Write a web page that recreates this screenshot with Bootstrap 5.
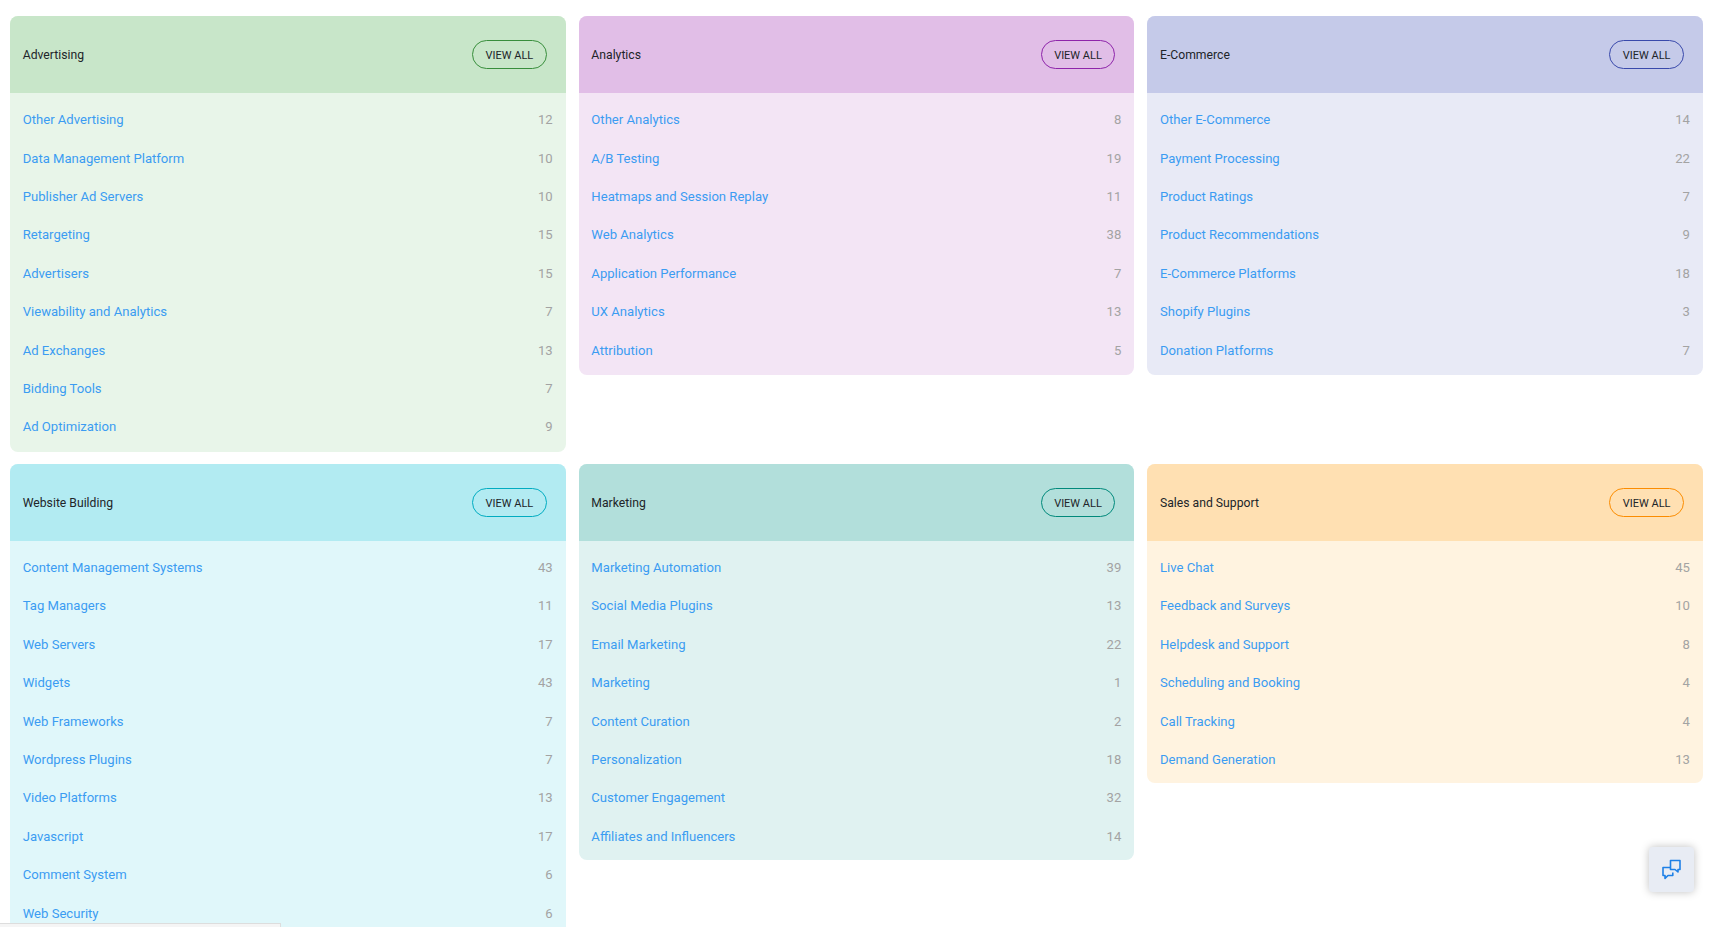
<!DOCTYPE html>
<html lang="en">
<head>
  <meta charset="UTF-8">
  <meta name="viewport" content="width=device-width, initial-scale=1.0">
  <title>Categories</title>
  <link href="https://cdn.jsdelivr.net/npm/bootstrap@5.3.0/dist/css/bootstrap.min.css" rel="stylesheet">
  <style>
    html, body { overflow: hidden; height: 927px; }
    body { font-family: Roboto, "Noto Sans", sans-serif; font-size: 13.100px; color: #212529; background: #fff; }
    .page-wrap { padding: 16px 13px 0 10px; }
    .cat-row { --bs-gutter-x: 13px; --bs-gutter-y: 0; margin-bottom: 12px; }
    .cat-card { border: 0; border-radius: 8px; overflow: hidden; background: var(--soft); }
    .cat-head { height: 77px; padding: 0 19px 0 12.700px; background: var(--strong); border: 0; border-radius: 0 !important; }
    .cat-title { padding-top: 1px; font-size: 12.200px; color: #212529; }
    .view-btn { width: 74.600px; height: 29px; padding: 1px 0 0; font-size: 11px; line-height: 27px; border: 1px solid var(--line); border-radius: 15px; color: #212529; background: transparent; text-transform: uppercase; }
    .cat-list { padding: 7.800px 0 4.500px; background: transparent; border-radius: 0; }
    #row-top .cat-list { padding: 7.800px 0 5.500px; }
    .cat-item { height: 38.400px; padding: 0 13px 0 12.700px; background: transparent; border: 0; }
    .cat-item a { color: #3b9cf2; text-decoration: none; }
    .cat-count { color: #a3a3a3; }
    .green { --strong: #c8e6c9; --soft: #e8f5e9; --line: #388e3c; }
    .purple { --strong: #e1bee7; --soft: #f3e5f5; --line: #8e24aa; }
    .indigo { --strong: #c5cae9; --soft: #e8eaf6; --line: #3949ab; }
    .cyan { --strong: #b2ebf2; --soft: #e0f7fa; --line: #00acc1; }
    .teal { --strong: #b2dfdb; --soft: #e0f2f1; --line: #00897b; }
    .orange { --strong: #ffe0b2; --soft: #fff3e0; --line: #fb8c00; }
    .chat-fab { position: fixed; left: 1649px; top: 847px; width: 45px; height: 45px; padding: 0; border: 0; border-radius: 4px; background: #e8ecf4; box-shadow: 0 0 8px rgba(0, 0, 0, .25); }
    .status-strip { position: fixed; left: 0; bottom: 0; width: 281px; height: 4px; background: #f5f5f5; border-top: 1px solid #ddd; border-right: 1px solid #ddd; }
  </style>
</head>
<body>
  <div class="page-wrap">
    <div class="row cat-row align-items-start" id="row-top"></div>
    <div class="row cat-row align-items-start" id="row-bottom"></div>
  </div>

  <button class="chat-fab d-flex align-items-center justify-content-center" type="button" aria-label="Chat">
    <svg width="22" height="22" viewBox="0 0 22 22" fill="none" stroke="#1e80e6" stroke-width="1.6" stroke-linejoin="round">
      <path d="M9 8.500H2v8h2v3l3-3h4.800v-3"/>
      <path d="M9.500 1.500h9.500v9h-2v2.500l-3-2.500h-4.500z"/>
    </svg>
  </button>
  <div class="status-strip"></div>

  <script>
    const rows = {
      'row-top': [
        ['green', 'Advertising', [['Other Advertising', 12], ['Data Management Platform', 10], ['Publisher Ad Servers', 10], ['Retargeting', 15], ['Advertisers', 15], ['Viewability and Analytics', 7], ['Ad Exchanges', 13], ['Bidding Tools', 7], ['Ad Optimization', 9]]],
        ['purple', 'Analytics', [['Other Analytics', 8], ['A/B Testing', 19], ['Heatmaps and Session Replay', 11], ['Web Analytics', 38], ['Application Performance', 7], ['UX Analytics', 13], ['Attribution', 5]]],
        ['indigo', 'E-Commerce', [['Other E-Commerce', 14], ['Payment Processing', 22], ['Product Ratings', 7], ['Product Recommendations', 9], ['E-Commerce Platforms', 18], ['Shopify Plugins', 3], ['Donation Platforms', 7]]]
      ],
      'row-bottom': [
        ['cyan', 'Website Building', [['Content Management Systems', 43], ['Tag Managers', 11], ['Web Servers', 17], ['Widgets', 43], ['Web Frameworks', 7], ['Wordpress Plugins', 7], ['Video Platforms', 13], ['Javascript', 17], ['Comment System', 6], ['Web Security', 6]]],
        ['teal', 'Marketing', [['Marketing Automation', 39], ['Social Media Plugins', 13], ['Email Marketing', 22], ['Marketing', 1], ['Content Curation', 2], ['Personalization', 18], ['Customer Engagement', 32], ['Affiliates and Influencers', 14]]],
        ['orange', 'Sales and Support', [['Live Chat', 45], ['Feedback and Surveys', 10], ['Helpdesk and Support', 8], ['Scheduling and Booking', 4], ['Call Tracking', 4], ['Demand Generation', 13]]]
      ]
    };

    for (const id in rows) {
      document.getElementById(id).innerHTML = rows[id].map(([color, title, items]) => `
        <div class="col-4">
          <div class="card cat-card ${color}">
            <div class="card-header cat-head d-flex align-items-center justify-content-between">
              <span class="cat-title">${title}</span>
              <a href="#" class="btn view-btn">View all</a>
            </div>
            <ul class="list-group cat-list">
              ${items.map(([name, count]) => `
                <li class="list-group-item cat-item d-flex align-items-center justify-content-between">
                  <a href="#">${name}</a><span class="cat-count">${count}</span>
                </li>`).join('')}
            </ul>
          </div>
        </div>`).join('');
    }
  </script>
</body>
</html>
